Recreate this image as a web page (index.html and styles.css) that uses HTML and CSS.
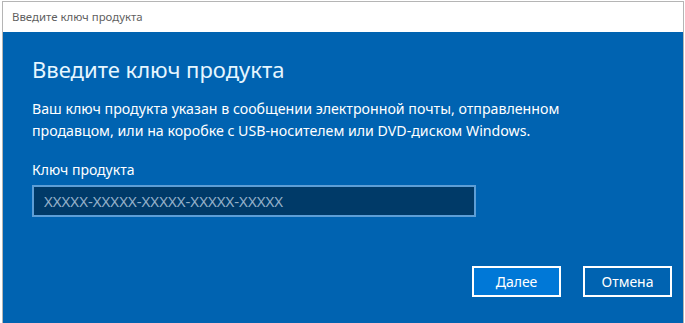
FILE: index.html
```html
<!DOCTYPE html>
<html>
	<head>
		<meta charset="UTF-8">
		<title>Введите ключ продукта</title>
		<link rel="stylesheet" href="styles.css">
	</head>
	<body>
		<section class="window">
			<header class="titlebar">Введите ключ продукта</header>
			<div class="dialog">
				<h1 class="heading">Введите ключ продукта</h1>
				<p class="text">Ваш ключ продукта указан в сообщении электронной почты, отправленном<br>продавцом, или на коробке с USB-носителем или DVD-диском Windows.</p>
				<label class="label" for="key">Ключ продукта</label>
				<input class="key" id="key" type="text" placeholder="XXXXX-XXXXX-XXXXX-XXXXX-XXXXX">
				<div class="buttons">
					<button class="btn btn-next">Далее</button>
					<button class="btn">Отмена</button>
				</div>
			</div>
		</section>
	</body>
</html>
```
FILE: styles.css
```css
body {
	margin: 0;
	background: #fff;
	font-family: "Noto Sans", "Open Sans", sans-serif;
	height: 323px;
	overflow: hidden;
}

.window {
	margin: 1px 2px 0 2px;
	width: 680px;
	border-top: 1px solid #b5b5b5;
	border-left: 1px solid #b5b5b5;
	border-right: 1px solid #b5b5b5;
	display: flex;
	flex-direction: column;
	height: 322px;
}

.titlebar {
	height: 30px;
	line-height: 30px;
	padding-left: 9px;
	font-size: 11.4px;
	color: #5f5f5f;
	background: #fff;
}

.dialog {
	flex: 1;
	background: #0063b1;
	padding: 0 0 0 29px;
	display: flex;
	flex-direction: column;
	color: #fff;
}

.heading {
	margin: 22px 0 0;
	font-size: 22px;
	font-weight: normal;
	color: #e6f6ff;
	line-height: 30px;
}

.text {
	margin: 14px 0 0;
	font-size: 14.2px;
	line-height: 22px;
}

.label {
	margin-top: 18px;
	font-size: 14px;
	line-height: 20px;
}

.key {
	margin-top: 5px;
	width: 444px;
	height: 32px;
	box-sizing: border-box;
	background: #003a68;
	border: 2px solid #5d9ed6;
	padding: 0 10px 1px;
	font: 15px "Noto Sans", sans-serif;
	color: #fff;
	outline: none;
}

.key::placeholder {
	color: #93b0c9;
}

.buttons {
	display: flex;
	justify-content: flex-end;
	gap: 22px;
	margin-top: 49px;
	padding-right: 11px;
}

.btn {
	width: 89px;
	height: 31px;
	box-sizing: border-box;
	border: 2px solid #fff;
	background: #0063b1;
	color: #fff;
	font: 14px "Noto Sans", sans-serif;
	padding: 0;
}

.btn-next {
	background: #0078d7;
}
```
